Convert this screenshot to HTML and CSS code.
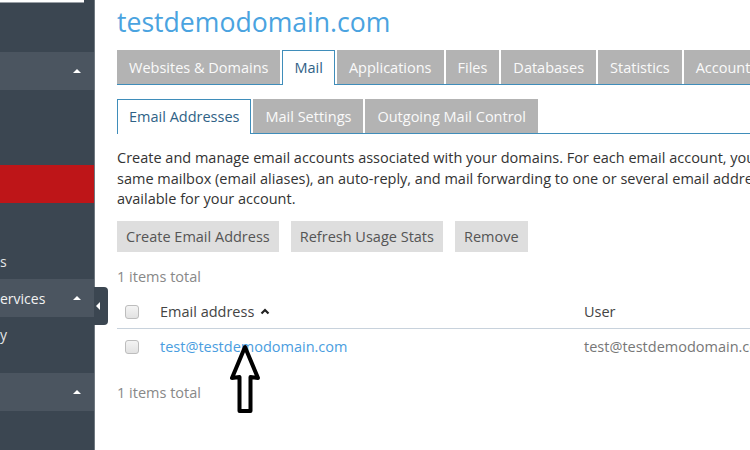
FILE: index.html
```html
<!DOCTYPE html>
<html>
<head>
<meta charset="utf-8">
<link rel="stylesheet" href="styles.css">
</head>
<body>
<div class="page">
  <aside class="sidebar">
    <div class="search"></div>
    <div class="sb-block h49"></div>
    <div class="sb-head"><span class="sb-label"></span><span class="caret"></span></div>
    <div class="sb-block h75"></div>
    <div class="sb-active"></div>
    <div class="sb-block h76"><span class="sb-item">s</span></div>
    <div class="sb-head"><span class="sb-label">ervices</span><span class="caret"></span></div>
    <div class="sb-block h56"><span class="sb-item first">y</span></div>
    <div class="sb-head"><span class="sb-label"></span><span class="caret"></span></div>
    <div class="sb-block grow"></div>
  </aside>
  <div class="toggle"><span class="toggle-arrow"></span></div>
  <main class="main">
    <h1 class="title">testdemodomain.com</h1>
    <nav class="tabs">
      <span class="tab">Websites &amp; Domains</span>
      <span class="tab active">Mail</span>
      <span class="tab">Applications</span>
      <span class="tab">Files</span>
      <span class="tab">Databases</span>
      <span class="tab">Statistics</span>
      <span class="tab">Account</span>
    </nav>
    <nav class="tabs sub">
      <span class="tab active">Email Addresses</span>
      <span class="tab">Mail Settings</span>
      <span class="tab">Outgoing Mail Control</span>
    </nav>
    <p class="desc">Create and manage email accounts associated with your domains. For each email account, you can set up additional email addresses that deliver mail to the<br>same mailbox (email aliases), an auto-reply, and mail forwarding to one or several email addresses. Also, you can use the webmail service<br>available for your account.</p>
    <div class="buttons">
      <span class="btn">Create Email Address</span>
      <span class="btn">Refresh Usage Stats</span>
      <span class="btn">Remove</span>
    </div>
    <div class="total">1 items total</div>
    <div class="table">
      <div class="row head">
        <span class="cell-check"><span class="checkbox"></span></span>
        <span class="cell-email">Email address <svg class="sort" width="10" height="7" viewBox="0 0 10 7"><path d="M1.5 5.5 L5 2 L8.5 5.5" fill="none" stroke="#222" stroke-width="2.2"/></svg></span>
        <span class="cell-user">User</span>
      </div>
      <div class="row">
        <span class="cell-check"><span class="checkbox"></span></span>
        <span class="cell-email link">test@testdemodomain.com</span>
        <span class="cell-user muted">test@testdemodomain.com</span>
      </div>
    </div>
    <div class="total bottom">1 items total</div>
  </main>
  <svg class="arrow" width="34" height="74" viewBox="0 0 34 74">
    <path d="M17 5 L4 36 L11.5 35 L11.5 69 L22.5 69 L22.5 35 L30 36 Z" fill="#fff" stroke="#000" stroke-width="4" stroke-linejoin="round"/>
  </svg>
</div>
</body>
</html>
```

FILE: styles.css
```css
* { box-sizing: border-box; }
html, body { margin: 0; padding: 0; }
body {
  width: 750px;
  height: 450px;
  overflow: hidden;
  background: #fff;
  font-family: "Open Sans", "Liberation Sans", sans-serif;
  font-size: 14.5px;
  color: #333;
}
.page {
  position: relative;
  display: flex;
  height: 450px;
}
.sidebar {
  width: 95px;
  flex: none;
  display: flex;
  flex-direction: column;
  background: #3b4651;
  border-right: 1px solid #6f7880;
}
.search {
  height: 3px;
  width: 84px;
  background: #fff;
  border-bottom: 1px solid #9aa0a6;
  flex: none;
}
.sb-block { flex: none; position: relative; }
.h49 { height: 49px; }
.h75 { height: 75px; }
.h76 { height: 76px; }
.h56 { height: 56px; }
.grow { flex: 1; }
.sb-head {
  height: 38px;
  flex: none;
  background: #4b5560;
  display: flex;
  align-items: center;
  justify-content: space-between;
  padding-right: 13px;
  color: #fff;
}
.sb-label { font-size: 14px; color: #f2f2f2; }
.caret {
  width: 0; height: 0;
  border-left: 4px solid transparent;
  border-right: 4px solid transparent;
  border-bottom: 4px solid #fff;
}
.sb-active {
  height: 38px;
  flex: none;
  background: #be1518;
}
.sb-item {
  position: absolute;
  left: 0;
  bottom: 8px;
  color: #e6e6e6;
  font-size: 14px;
}
.sb-item.first { top: 8px; bottom: auto; }
.toggle {
  position: absolute;
  left: 94px;
  top: 287px;
  width: 14px;
  height: 38px;
  background: #3b4651;
  border-radius: 0 4px 4px 0;
  display: flex;
  align-items: center;
  padding-left: 2px;
}
.toggle-arrow {
  width: 0; height: 0;
  border-top: 4px solid transparent;
  border-bottom: 4px solid transparent;
  border-right: 4px solid #fff;
}
.main {
  flex: none;
  width: 700px;
  padding-left: 22px;
}
.title {
  margin: 4px 0 0;
  font-weight: 400;
  font-size: 26.6px;
  line-height: 36px;
  color: #4aa3e0;
  white-space: nowrap;
}
.tabs {
  display: flex;
  gap: 2px;
  margin-top: 10px;
  border-bottom: 1px solid #3f8dba;
  white-space: nowrap;
  width: 700px;
}
.tabs.sub { margin-top: 14px; }
.tab {
  flex: none;
  height: 34px;
  line-height: 35px;
  padding: 0 12px;
  background: #b3b3b3;
  color: #fafafa;
  font-size: 14.5px;
}
.tab.active {
  background: #fff;
  color: #2f6286;
  border: 1px solid #3f8dba;
  border-bottom: none;
  height: 35px;
  margin-bottom: -1px;
  line-height: 34px;
  padding: 0 11px;
}
.desc {
  margin: 14px 0 0;
  line-height: 20.5px;
  font-size: 14.5px;
  color: #333;
  white-space: nowrap;
}
.buttons {
  display: flex;
  gap: 12px;
  margin-top: 11px;
}
.btn {
  height: 31px;
  line-height: 31px;
  padding: 0 9px;
  background: #dedede;
  color: #555;
  white-space: nowrap;
}
.total {
  margin-top: 15px;
  color: #888;
  line-height: 20px;
}
.table {
  width: 640px;
  margin-top: 9px;
}
.row {
  display: flex;
  align-items: center;
  height: 36px;
  white-space: nowrap;
}
.row.head {
  height: 33px;
  border-bottom: 1px solid #c8d2dc;
}
.cell-check {
  flex: none;
  width: 43px;
  padding-left: 8px;
  display: flex;
  align-items: center;
}
.checkbox {
  width: 14px;
  height: 14px;
  border: 1px solid #bdbdbd;
  border-radius: 3px;
  background: linear-gradient(#f4f4f4, #e2e2e2);
}
.cell-email {
  flex: none;
  width: 424px;
  color: #444;
  display: flex;
  align-items: center;
  gap: 6px;
}
.sort { flex: none; margin-top: -1px; }
.cell-email.link { color: #4a9de0; }
.cell-user { flex: none; color: #444; }
.cell-user.muted { color: #777; }
.total.bottom { margin-top: 18px; }
.arrow {
  position: absolute;
  left: 228px;
  top: 342px;
}
```
